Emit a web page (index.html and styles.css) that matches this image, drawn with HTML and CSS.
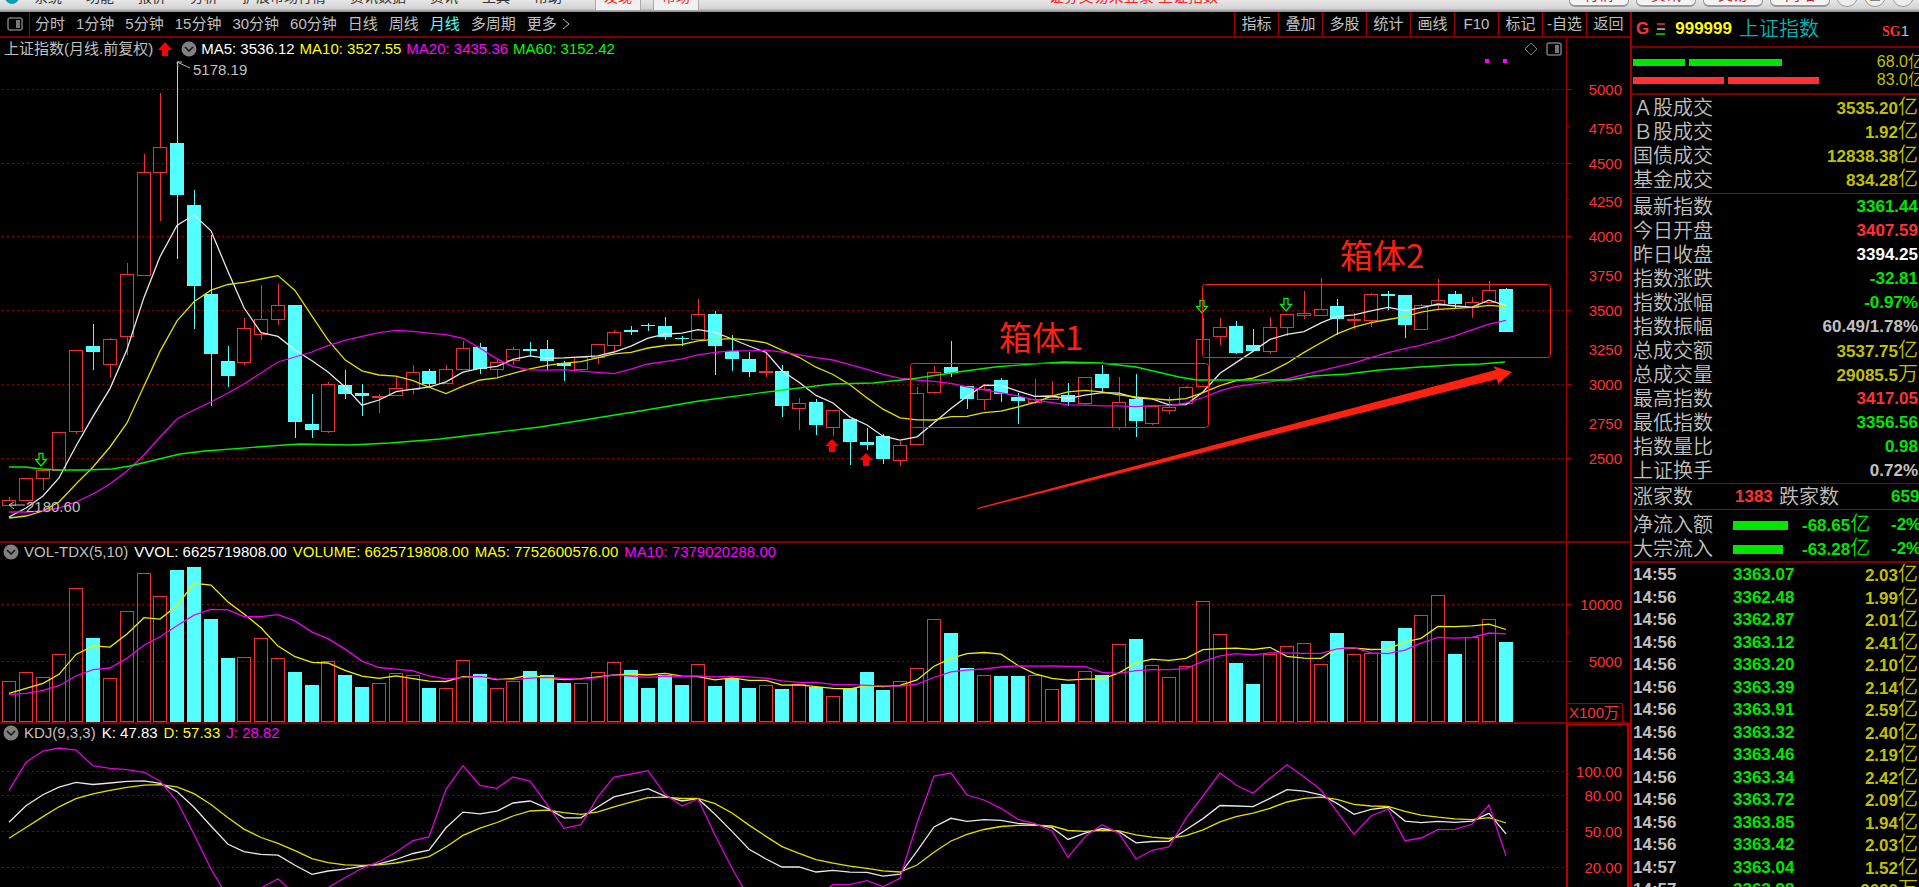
FILE: index.html
```html
<!DOCTYPE html>
<html lang="zh-CN">
<head>
<meta charset="utf-8">
<title>上证指数</title>
<link rel="stylesheet" href="styles.css">
</head>
<body>
<header class="menubar">
  <span class="logo"></span>
  <nav class="menu">
    <button>系统</button><button>功能</button><button>报价</button><button>分析</button><button>扩展市场行情</button><button>资讯数据</button><button>资讯</button><button>工具</button><button>帮助</button>
  </nav>
  <div class="tabs"><button>发现</button><button>市场</button></div>
  <p class="notice">证券交易未登录 上证指数</p>
  <div class="pills"><button>行情</button><button>资讯</button><button>交易</button><button>网站</button></div>
  <div class="winbtns"><button aria-label="最小化">–</button><button aria-label="还原">□</button><button aria-label="关闭">×</button></div>
</header>
<div class="main">
  <main class="charts">
    <div class="toolbar">
      <button class="split" aria-label="侧栏"><svg width="16" height="14" viewBox="0 0 16 14"><rect x="1" y="1" width="14" height="12" rx="2" fill="none" stroke="#777" stroke-width="1.5"/><rect x="9" y="3" width="4" height="8" fill="#777"/></svg></button>
      <div class="periods">
        <button>分时</button><button>1分钟</button><button>5分钟</button><button>15分钟</button><button>30分钟</button><button>60分钟</button><button>日线</button><button>周线</button><button class="active">月线</button><button>多周期</button><button class="more">更多<svg width="8" height="12" viewBox="0 0 8 12"><path d="M1 1L7 6L1 11" fill="none" stroke="#c0c0c0"/></svg></button>
      </div>
      <div class="actions">
        <button>指标</button><button>叠加</button><button>多股</button><button>统计</button><button>画线</button><button>F10</button><button>标记</button><button>-自选</button><button>返回</button>
      </div>
    </div>
    <section class="pane price">
      <svg class="plot" id="price"></svg>
      <div class="legend first">
        <span>上证指数(月线.前复权)</span>
        <svg width="14" height="14" viewBox="0 0 14 14"><path d="M7 0L14 8H10V14H4V8H0Z" fill="#f00"/></svg>
        <svg class="drop" width="16" height="16" viewBox="0 0 16 16"><circle cx="8" cy="8" r="7.5" fill="#808080"/><path d="M4 6L8 10L12 6" fill="none" stroke="#111" stroke-width="1.5"/></svg>
        <span class="white">MA5: 3536.12</span><span class="yellow">MA10: 3527.55</span><span class="magenta">MA20: 3435.36</span><span class="green">MA60: 3152.42</span>
        <div class="corner">
          <svg width="16" height="14" viewBox="0 0 16 14"><path d="M8 1L14 7L8 13L2 7Z" fill="none" stroke="#777"/></svg>
          <svg width="16" height="14" viewBox="0 0 16 14"><rect x="1" y="1" width="14" height="12" rx="2" fill="none" stroke="#777" stroke-width="1.5"/><rect x="9" y="3" width="4" height="8" fill="#777"/></svg>
        </div>
      </div>
    </section>
    <section class="pane volume">
      <svg class="plot" id="volume"></svg>
      <div class="legend">
        <svg width="16" height="16" viewBox="0 0 16 16"><circle cx="8" cy="8" r="7.5" fill="#808080"/><path d="M4 6L8 10L12 6" fill="none" stroke="#111" stroke-width="1.5"/></svg>
        <span>VOL-TDX(5,10)</span><span class="white">VVOL: 6625719808.00</span><span class="yellow">VOLUME: 6625719808.00</span><span class="yellow">MA5: 7752600576.00</span><span class="magenta">MA10: 7379020288.00</span>
      </div>
    </section>
    <section class="pane kdj">
      <svg class="plot" id="kdj"></svg>
      <div class="legend">
        <svg width="16" height="16" viewBox="0 0 16 16"><circle cx="8" cy="8" r="7.5" fill="#808080"/><path d="M4 6L8 10L12 6" fill="none" stroke="#111" stroke-width="1.5"/></svg>
        <span>KDJ(9,3,3)</span><span class="white">K: 47.83</span><span class="yellow">D: 57.33</span><span class="magenta">J: 28.82</span>
      </div>
    </section>
  </main>
  <aside class="side">
    <div class="quote">
      <b class="red">G</b>
      <svg width="10" height="12" viewBox="0 0 10 12"><path d="M1 1H9" stroke="#ff3232" stroke-width="1.5"/><path d="M1 6H9" stroke="#c0c0c0" stroke-width="1.5"/><path d="M0 11H9" stroke="#00e600" stroke-width="1.5"/></svg>
      <b class="code">999999</b><span class="name">上证指数</span><span class="sg"><b>SG</b>1</span>
    </div>
    <div class="depth">
      <div class="depthrow buy"><i></i><i></i><span>68.0亿</span></div>
      <div class="depthrow sell"><i></i><i></i><span>83.0亿</span></div>
    </div>
    <table class="stats turnover">
      <tr><th>Ａ股成交</th><td class="gold">3535.20<em>亿</em></td></tr>
      <tr><th>Ｂ股成交</th><td class="gold">1.92<em>亿</em></td></tr>
      <tr><th>国债成交</th><td class="gold">12838.38<em>亿</em></td></tr>
      <tr><th>基金成交</th><td class="gold">834.28<em>亿</em></td></tr>
    </table>
    <table class="stats">
      <tr><th>最新指数</th><td class="up">3361.44</td></tr>
      <tr><th>今日开盘</th><td class="red">3407.59</td></tr>
      <tr><th>昨日收盘</th><td class="white">3394.25</td></tr>
      <tr><th>指数涨跌</th><td class="up">-32.81</td></tr>
      <tr><th>指数涨幅</th><td class="up">-0.97%</td></tr>
      <tr><th>指数振幅</th><td>60.49/1.78%</td></tr>
      <tr><th>总成交额</th><td class="gold">3537.75<em>亿</em></td></tr>
      <tr><th>总成交量</th><td class="gold">29085.5<em>万</em></td></tr>
      <tr><th>最高指数</th><td class="red">3417.05</td></tr>
      <tr><th>最低指数</th><td class="up">3356.56</td></tr>
      <tr><th>指数量比</th><td class="up">0.98</td></tr>
      <tr><th>上证换手</th><td>0.72%</td></tr>
    </table>
    <div class="breadth"><span>涨家数</span><b class="red">1383</b><span>跌家数</span><b class="up">659</b></div>
    <div class="flows">
      <div class="flow"><span>净流入额</span><i class="wide"></i><b>-68.65<em>亿</em></b><b>-2%</b></div>
      <div class="flow"><span>大宗流入</span><i></i><b>-63.28<em>亿</em></b><b>-2%</b></div>
    </div>
    <table class="ticks">
      <tr><td>14:55</td><td>3363.07</td><td>2.03<em>亿</em></td></tr>
      <tr><td>14:56</td><td>3362.48</td><td>1.99<em>亿</em></td></tr>
      <tr><td>14:56</td><td>3362.87</td><td>2.01<em>亿</em></td></tr>
      <tr><td>14:56</td><td>3363.12</td><td>2.41<em>亿</em></td></tr>
      <tr><td>14:56</td><td>3363.20</td><td>2.10<em>亿</em></td></tr>
      <tr><td>14:56</td><td>3363.39</td><td>2.14<em>亿</em></td></tr>
      <tr><td>14:56</td><td>3363.91</td><td>2.59<em>亿</em></td></tr>
      <tr><td>14:56</td><td>3363.32</td><td>2.40<em>亿</em></td></tr>
      <tr><td>14:56</td><td>3363.46</td><td>2.19<em>亿</em></td></tr>
      <tr><td>14:56</td><td>3363.34</td><td>2.42<em>亿</em></td></tr>
      <tr><td>14:56</td><td>3363.72</td><td>2.09<em>亿</em></td></tr>
      <tr><td>14:56</td><td>3363.85</td><td>1.94<em>亿</em></td></tr>
      <tr><td>14:56</td><td>3363.42</td><td>2.03<em>亿</em></td></tr>
      <tr><td>14:57</td><td>3363.04</td><td>1.52<em>亿</em></td></tr>
      <tr><td>14:57</td><td>3363.98</td><td>2020<em>万</em></td></tr>
    </table>
  </aside>
</div>
<script src="chart.js"></script>
</body>
</html>
```

FILE: styles.css
```css
* { box-sizing: border-box; }
body {
  margin: 0;
  height: 100vh;
  display: flex;
  flex-direction: column;
  overflow: hidden;
  background: #000;
  color: #c0c0c0;
  font: 15px/20px "Liberation Sans", "Noto Sans CJK SC", sans-serif;
}
button { margin: 0; padding: 0; border: 0; background: none; color: inherit; font: inherit; white-space: nowrap; }
p { margin: 0; }
em, i { font-style: normal; }
.white { color: #fff; }
.yellow { color: #ff0; }
.magenta { color: #f0f; }
.green { color: #0f0; }
.red { color: #ff3232; }
.up { color: #00e600; }
.gold { color: #c0c000; }

.menubar {
  display: flex;
  align-items: flex-end;
  height: 12px;
  flex: none;
  padding-bottom: 5px;
  overflow: hidden;
  background: linear-gradient(#e6e6e6, #d4d4d4 70%, #8a8a8a);
  color: #333;
}
.logo { width: 14px; height: 14px; margin: 0 15px 3px 5px; border-radius: 50%; background: #0a9fb0; flex: none; }
.menu { display: flex; gap: 24px; font-size: 14px; }
.tabs { display: flex; gap: 12px; margin-left: 33px; color: #f22; font-size: 14px; }
.tabs button { padding: 0 8px; border: 1px solid #aaa; background: #f0f0f0; margin-bottom: -4px; padding-bottom: 3px; }
.notice { margin-left: auto; color: #f22; }
.pills { display: flex; gap: 7px; margin-left: 351px; color: #b22; }
.pills button { width: 60px; height: 24px; line-height: 20px; border: 1px solid #999; border-bottom-width: 2px; border-radius: 6px; background: #f4f4f4; }
.winbtns { display: flex; gap: 6px; margin: 0 5px 0 6px; }
.winbtns button { width: 22px; height: 22px; border: 1px solid #999; border-radius: 50%; background: #eee; line-height: 18px; }

.main { flex: 1; min-height: 0; display: grid; grid-template-columns: minmax(0, 1fr) 289px; }
.charts { display: grid; grid-template-rows: 26px minmax(0, 505fr) minmax(0, 181fr) minmax(0, 163fr); min-height: 0; }
.toolbar { display: flex; border-bottom: 2px solid #800000; }
.split { width: 30px; border-right: 1px solid #a00000; display: grid; place-items: center; }
.periods { display: flex; gap: 11px; padding-left: 5px; }
.periods .active { color: #54ffff; }
.more { display: flex; align-items: center; gap: 5px; }
.actions { margin-left: auto; display: grid; grid-template-columns: repeat(9, 44px); }
.actions button { border-left: 1px solid #a00000; }

.pane { position: relative; min-height: 0; overflow: hidden; border-bottom: 2px solid #800000; }
.kdj { border: 0; }
.plot { position: absolute; inset: 0; width: 100%; height: 100%; }
.legend { position: relative; display: flex; align-items: center; gap: 6px; height: 18px; padding-left: 3px; white-space: nowrap; }
.legend svg { flex: none; }
.legend svg + span { margin-left: -1px; }
.first { height: 22px; padding-left: 4px; gap: 5px; }
.first .drop { margin: 0 0 0 4px; }
.corner { margin-left: auto; display: flex; gap: 7px; padding-right: 68px; }

.plot text { fill: #c0c0c0; font: 15px "Liberation Sans", "Noto Sans CJK SC", sans-serif; }
.plot .axis { fill: #ff3232; }
.plot .note { fill: #ff2010; font-size: 33px; font-family: "Noto Sans CJK SC", sans-serif; }

.side { border-left: 2px solid #a00000; overflow: hidden; font-size: 20px; line-height: 24px; white-space: nowrap; }
.side b, .side td { font-size: 17px; font-weight: bold; }
.side em { font-size: 20px; font-weight: 350; }
.side span, .side th { font-weight: 350; }
.quote { display: flex; align-items: center; height: 36px; padding: 0 10px 0 4px; border-bottom: 2px solid #800000; }
.quote svg { margin: 0 9px 0 7px; }
.quote .code { color: #ff0; margin-right: 7px; }
.quote .name { color: #00b4b4; }
.quote .sg { margin-left: auto; padding-top: 3px; font: 15px "Liberation Sans", sans-serif; }
.quote .sg b { font: bold 14px "Liberation Serif", serif; color: #ff3232; }
.depth { height: 47px; padding-top: 5px; border-bottom: 2px solid #800000; }
.depthrow { display: flex; align-items: center; height: 18px; padding-left: 1px; }
.depthrow i { height: 7px; margin-right: 4px; flex: none; background: #00e600; }
.depthrow span { margin-left: auto; margin-right: -5px; font-size: 16px; color: #c0c000; }
.buy i:nth-child(1) { width: 52px; }
.buy i:nth-child(2) { width: 93px; }
.sell i { width: 91px; background: #ff3232; }
table { width: 100%; border-spacing: 0; }
th, td { padding: 0; }
.stats { border-bottom: 1px solid #a00000; padding-top: 1px; }
.turnover { padding-bottom: 1px; }
.stats th { height: 24px; padding-left: 1px; text-align: left; }
.stats td { padding-right: 1px; text-align: right; line-height: 20px; }
.breadth { display: grid; grid-template-columns: 102px 44px 112px auto; align-items: center; height: 26px; padding-left: 1px; border-bottom: 1px solid #a00000; }
.flows { height: 53px; padding-top: 2px; border-bottom: 2px solid #800000; }
.flow { display: grid; grid-template-columns: 100px 69px 89px auto; align-items: center; height: 24px; padding-left: 1px; }
.flow i { width: 50px; height: 9px; background: #00e600; }
.flow .wide { width: 55px; }
.flow b { color: #00e600; }
.ticks { padding-top: 1px; }
.ticks td { height: 22px; line-height: 20px; color: #c0c0c0; }
.ticks tr:nth-child(even) td { height: 23px; }
.ticks td:nth-child(1) { width: 101px; padding-left: 1px; }
.ticks td:nth-child(2) { color: #00e600; }
.ticks td:nth-child(3) { color: #c0c000; text-align: right; padding-right: 1px; }
```

FILE: chart.js
```js
// Candles: colour (r rising / c falling), high, body top, body bottom, low.
const candles = `r497,500,505,505 r478,478,500,500 r470,470,478,490 r432,432,470,471 r350,350,431,434 c324,346,352,370 r338,339,364,378 r263,274,336,355 r154,172,275,275 r93,147,172,221
c63,143,195,259 c190,205,286,329 c235,294,354,406 c346,361,376,387 r318,328,362,365 r285,319,334,340 r284,305,319,325 c305,305,422,438 c394,424,430,438 r382,384,431,433
c370,385,394,399 c384,393,396,416 r394,396,397,413 r376,388,395,395 r365,372,389,394 c369,371,384,388 r365,369,383,383 r341,348,369,370 c343,347,369,374 r358,362,369,378
r347,349,360,365 c342,349,351,356 c340,349,361,370 c361,363,366,381 r357,357,369,371 r344,344,357,364 r330,332,345,352 c326,330,332,335 c323,325,326,331 c317,326,337,340
c336,338,339,346 r299,314,339,339 c311,314,346,375 c335,351,359,371 c352,359,372,377 r353,371,372,377 c365,371,406,417 r398,403,408,430 c399,402,425,435 r410,410,427,436
c419,419,442,465 c428,442,445,450 c434,436,459,464 r441,445,460,466 r387,393,444,444 r366,372,392,394 c341,367,373,377 c386,386,399,409 r384,389,399,410 c378,380,394,402
c393,397,401,424 r379,399,402,404 r381,397,399,399 c383,395,402,406 r377,377,403,405 c365,374,388,393 r377,402,427,430 c374,399,421,437 r405,406,423,425 r397,407,410,414
r386,387,403,403 r318,339,386,386 r318,327,336,345 c321,326,353,354 c329,345,351,351 r317,327,351,354 r314,314,327,336 r291,313,315,319 r278,309,315,315 c299,306,319,335
r313,319,320,329 r293,294,320,327 c291,294,296,310 c295,295,325,338 r304,305,329,330 r279,300,305,309 c291,294,304,309 r297,302,307,318 r281,290,302,302 c288,289,332,332`
  .split(/\s+/).map(s => [s[0], ...s.slice(1).split(',').map(Number)]);

const volumes = [437,410,426,358,160,308,430,227,115,182,106,95,252,368,366,310,370,412,451,377,421,455,445,415,419,458,460,374,417,460,438,409,421,443,445,410,381,406,458,421,451,388,454,428,458,451,462,448,457,482,459,412,466,437,400,253,293,398,419,424,424,419,463,448,409,421,328,312,391,427,392,197,298,383,448,358,332,325,388,293,358,354,319,278,241,181,357,305,253,322]
  .map(v => 535 + v / 3);

// Oscillator input: J where it is inside the pane, K (prefixed) where it is not.
const kdj = '765 682 648 639 645 692 700 704 712 738 798 898 1002 K928 K950 K958 1031 K991 K1018 K1008 1028 1000 980 952 917 906 763 692 751 760 726 738 808 880 869 785 726 717 707 778 813 792 900 1000 K943 K972 K996 K996 K1011 K1006 1048 1037 1055 1030 865 723 714 780 795 820 853 866 888 967 905 869 895 972 946 936 850 783 714 750 775 730 689 725 765 830 898 843 822 917 909 884 883 868 810 962'.split(' ');

const AXIS = 64, REF_W = 1566, STEP = 16.815;
const colX = i => Math.round(9 + STEP * i);
const average = (list, n, seed) => list.map((_, i) =>
  i < seed.length ? seed[i] : list.slice(i - n + 1, i + 1).reduce((a, b) => a + b, 0) / n);

function frame(id, top, height) {
  const svg = document.getElementById(id);
  const w = svg.clientWidth, h = svg.clientHeight;
  const plotW = w - AXIS, kx = plotW / REF_W, ky = svg.parentNode.offsetHeight / height;
  const X = x => x * kx, Y = y => (y - top) * ky;
  let out = '';
  const f = {
    w, h, plotW, X, Y,
    add: s => { out += s; },
    line: (x1, y1, x2, y2, c, extra = '') => f.add(`<path d="M${x1} ${y1}L${x2} ${y2}" stroke="${c}" shape-rendering="crispEdges" ${extra}/>`),
    poly: (pts, c) => f.add(`<polyline points="${pts.map(p => X(p[0]).toFixed(1) + ',' + Y(p[1]).toFixed(1)).join(' ')}" fill="none" stroke="${c}" stroke-width="1.3"/>`),
    series: (ys, c) => f.poly(ys.map((y, i) => [colX(i), y]), c),
    grid: y => f.line(2, Math.round(Y(y)) - .5, plotW, Math.round(Y(y)) - .5, '#900000', 'stroke-dasharray="2 3"'),
    tick: (y, n) => f.line(plotW, Math.round(Y(y)) - .5, plotW + n, Math.round(Y(y)) - .5, '#a00000'),
    label: (y, t) => f.add(`<text class="axis" x="${w - 8}" y="${Y(y) + 5}" text-anchor="end">${t}</text>`),
    done: () => { svg.innerHTML = out; }
  };
  return f;
}

function bar(f, i, c, top, bottom) {
  const x = Math.round(f.X(colX(i))) - 7, y = Math.round(f.Y(top)), h = Math.max(Math.round(f.Y(bottom)) - y, 1);
  f.add(c === 'c'
    ? `<rect x="${x}" y="${y}" width="14" height="${h}" fill="#54ffff"/>`
    : `<rect x="${x + .5}" y="${y + .5}" width="13" height="${h}" fill="none" stroke="#ee3030"/>`);
}

function drawPrice() {
  const f = frame('price', 38, 505), { X, Y } = f;
  [90, 164, 237, 311, 385, 459].forEach((y, i) => { f.grid(y); f.tick(y, 6); f.label(y, 5000 - i * 500); });
  [127, 200, 274, 348, 422].forEach((y, i) => { f.tick(y, 3); f.label(y + 2, 4750 - i * 500); });
  f.line(f.plotW + .5, 0, f.plotW + .5, f.h, '#a00000');
  candles.forEach(([c, hi, t, b, lo], i) => {
    const x = Math.round(X(colX(i))) + .5, col = c === 'c' ? '#54ffff' : '#ee3030';
    if (hi < t) f.line(x, Y(hi), x, Y(t), col);
    if (lo > b) f.line(x, Y(b), x, Y(lo), col);
    bar(f, i, c, t, b);
  });
  const close = candles.map(k => k[0] === 'r' ? k[2] : k[3]);
  f.series(average(close, 5, [517, 508, 496, 478]), '#e8e8e8');
  f.series(average(close, 10, [518, 516, 511, 502, 484, 467, 447, 423, 386]), '#e0e000');
  f.series(average(close, 20, [512, 512, 511, 508, 502, 494, 484, 471, 455, 437, 419, 410, 402, 393, 384, 373, 362, 357, 352]), '#e800e8');
  f.poly([[9,467],[25,467],[42,469],[60,470],[85,470],[112,469],[130,466],[155,460],[180,454],[205,451],[270,446],[300,444],[350,445],[390,443],[440,439],[490,433],[540,427],[590,419],[640,411],[699,401],[775,391],[832,384],[873,383],[911,379],[958,372],[995,367],[1032,364],[1064,362],[1101,363],[1136,367],[1179,377],[1197,380],[1290,380],[1313,376],[1347,374],[1380,370],[1420,367],[1453,365],[1480,364],[1505,362]], '#00f000');
  [[832, 439], [866, 453]].forEach(([x, y]) => f.add(`<path transform="translate(${X(x) - 7} ${Y(y)})" d="M7 0L14 7H10V13H4V7H0Z" fill="#f00"/>`));
  [[41, 453], [1202, 300], [1286, 298]].forEach(([x, y]) => f.add(`<path transform="translate(${X(x) - 6} ${Y(y)})" d="M4 .5H8V6.5H11.5L6 13L.5 6.5H4Z" fill="none" stroke="#00f000" stroke-width="1.3"/>`));
  f.add(`<path d="M${X(177)} ${Y(62)}l13 6m-13 -6h5m-5 0l1 5" fill="none" stroke="#c0c0c0"/><text x="${X(193)}" y="${Y(75)}">5178.19</text>`);
  f.add(`<path d="M${X(9)} ${Y(505)}h16m-16 0l5 -3m-5 3l5 4" fill="none" stroke="#c0c0c0"/><text x="${X(26)}" y="${Y(512)}">2180.60</text>`);
  f.add(`<rect x="${X(1485)}" y="${Y(59)}" width="4" height="4" fill="#f0f"/><rect x="${X(1503)}" y="${Y(59)}" width="4" height="4" fill="#f0f"/>`);
  [[910, 363, 298, 64], [1202, 284, 348, 73]].forEach(([x, y, w, h]) =>
    f.add(`<rect x="${Math.round(X(x)) + .5}" y="${Math.round(Y(y)) + .5}" width="${X(w)}" height="${Y(y + h) - Y(y)}" rx="3" fill="none" stroke="#ff2010"/>`));
  f.add(`<polygon points="${[[977, 508], [1496, 370], [1493, 366], [1512, 372], [1498, 384], [1497, 379], [978, 509]].map(p => X(p[0]) + ',' + Y(p[1])).join(' ')}" fill="#ff2010"/>`);
  f.add(`<text class="note" x="${X(999)}" y="${Y(350)}">箱体1</text><text class="note" x="${X(1340)}" y="${Y(268)}">箱体2</text>`);
  f.done();
}

function drawVolume() {
  const f = frame('volume', 543, 181);
  [[605, 10000], [662, 5000]].forEach(([y, t]) => { f.grid(y); f.tick(y, 6); f.label(y, t); });
  f.tick(633, 3);
  f.line(f.plotW + .5, 0, f.plotW + .5, f.h, '#a00000');
  volumes.forEach((v, i) => bar(f, i, candles[i][0], v, candles[i][0] === 'c' ? 722 : 721));
  f.series(average(volumes, 5, [475, 460, 445, 418].map(v => 535 + v / 3)), '#f0f000');
  f.series(average(volumes, 10, [479, 475, 466, 452, 423, 404, 399, 370, 331].map(v => 535 + v / 3)), '#f000f0');
  f.add(`<rect x="${f.plotW + .5}" y="${f.h - 18.5}" width="56" height="20" fill="none" stroke="#a00000"/><text class="axis" x="${f.plotW + 3}" y="${f.h - 4}">X100万</text>`);
  f.done();
}

function drawKdj() {
  const f = frame('kdj', 724, 163);
  [[772, '100.00'], [796, '80.00'], [832, '50.00'], [868, '20.00'], [892, '0.00']].forEach(([y, t]) => { f.grid(y); f.label(y, t); });
  f.add(`<rect x="${f.plotW + 1}" y="0" width="${AXIS - 3}" height="${f.h + 9}" fill="none" stroke="#b80000" stroke-width="2"/>`);
  const K = [], D = [], J = [];
  let prev = 910;
  kdj.forEach((s, i) => {
    let k, d;
    if (i === 0) { k = 862; d = 910; }
    else { k = s[0] === 'K' ? +s.slice(1) : (3 * s + 4 * prev) / 7; d = (2 * prev + k) / 3; }
    prev = d;
    K.push(535 + k / 3); D.push(535 + d / 3); J.push(535 + (3 * k - 2 * d) / 3);
  });
  f.series(K, '#e8e8e8');
  f.series(D, '#e0e000');
  f.series(J, '#e000e0');
  f.done();
}

function draw() { drawPrice(); drawVolume(); drawKdj(); }
addEventListener('resize', draw);
draw();
```
